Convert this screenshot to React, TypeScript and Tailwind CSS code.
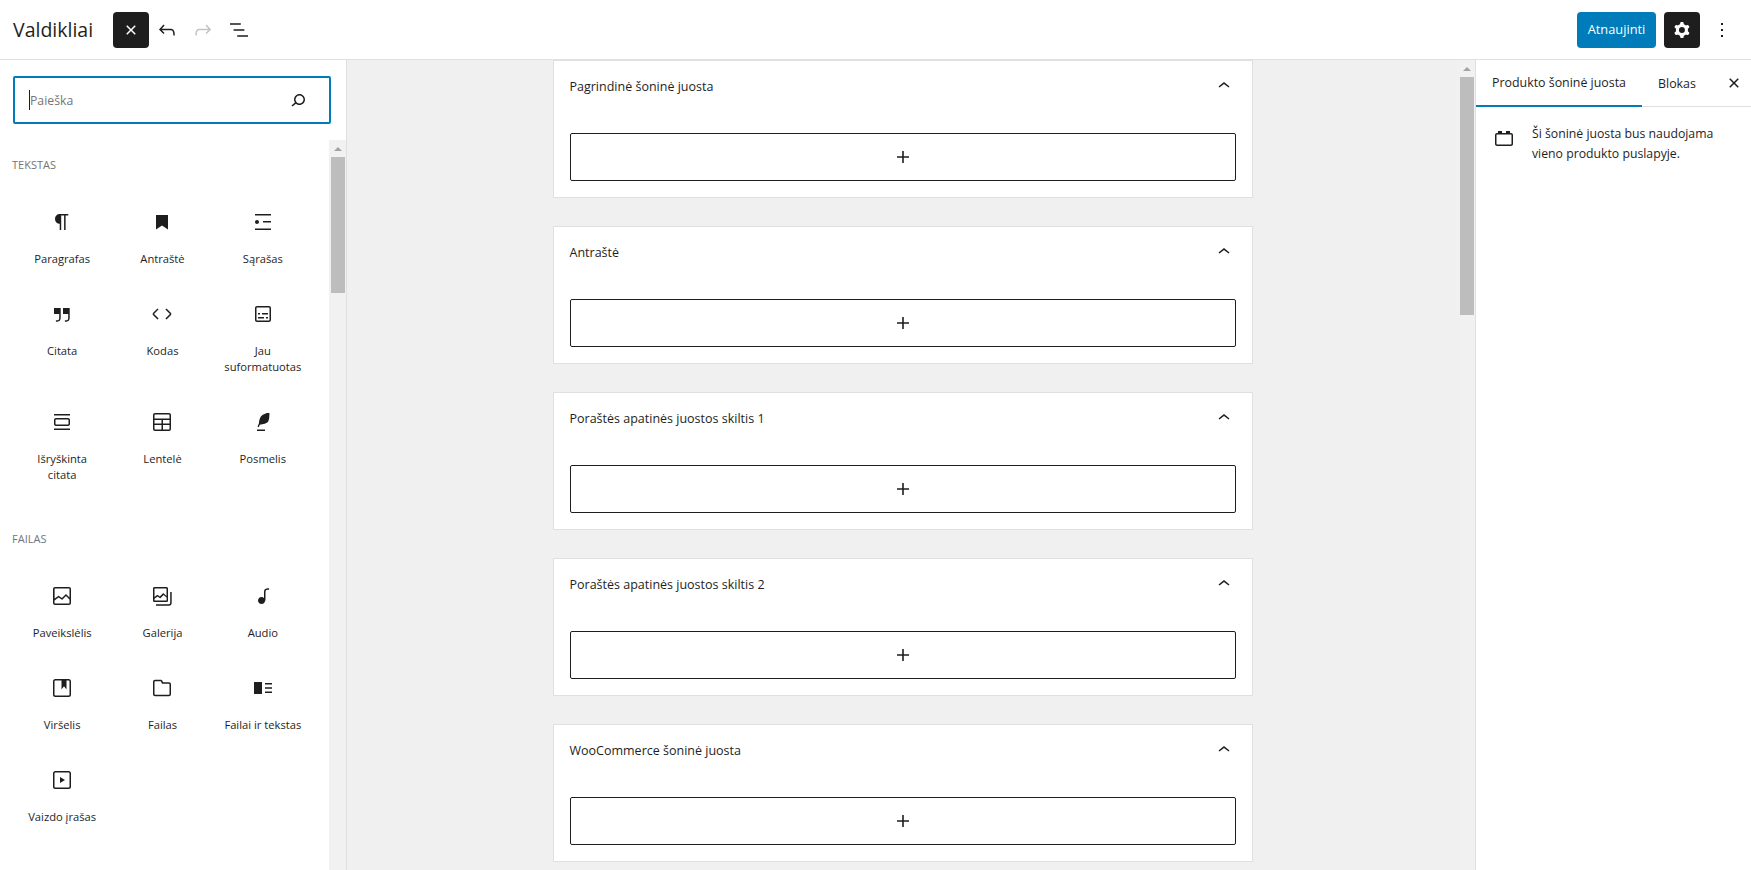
const font = { fontFamily: '"Open Sans", "Noto Sans", sans-serif' };

const icons: Record<string, string> = {
  paragraph: "M18.3 4H9.9v-.1l-.9.2c-2.3.4-4 2.4-4 4.8s1.7 4.4 4 4.8l.7.1V20h1.5V5.5h2.9V20h1.5V5.5h2.7V4z",
  heading: "M6 5h12v14.5l-6-4-6 4z",
  list: "M4 4v1.5h16V4H4zm8 8.5h8V11h-8v1.5zM4 20h16v-1.5H4V20zm4-8c0-1.1-.9-2-2-2s-2 .9-2 2 .9 2 2 2 2-.9 2-2z",
  quote: "M13 6v6h5.2v4c0 .8-.2 1.4-.5 1.7-.6.6-1.6.6-2.5.5h-.3v1.5h.5c1 0 2.3-.1 3.3-1 .6-.6 1-1.6 1-2.8V6H13zm-9 6h5.2v4c0 .8-.2 1.4-.5 1.7-.6.6-1.6.6-2.5.5h-.3v1.5h.5c1 0 2.3-.1 3.3-1 .6-.6 1-1.6 1-2.8V6H4v6z",
  code: "M20.8 10.7l-4.3-4.3-1.1 1.1 4.3 4.3c.1.1.1.3 0 .4l-4.3 4.3 1.1 1.1 4.3-4.3c.7-.8.7-1.9 0-2.6zM4.2 11.8l4.3-4.3-1-1-4.3 4.3c-.7.7-.7 1.8 0 2.5l4.3 4.3 1.1-1.1-4.3-4.3c-.2-.1-.2-.3-.1-.4z",
  preformatted: "M18 4H6c-1.1 0-2 .9-2 2v12c0 1.1.9 2 2 2h12c1.1 0 2-.9 2-2V6c0-1.1-.9-2-2-2zm.5 14c0 .3-.2.5-.5.5H6c-.3 0-.5-.2-.5-.5V6c0-.3.2-.5.5-.5h12c.3 0 .5.2.5.5v12zM7 16.5h6V15H7v1.5zm4-4h6V11h-6v1.5zM9 11H7v1.5h2V11zm6 5.5h2V15h-2v1.5z",
  pullquote: "M18 8H6c-1.1 0-2 .9-2 2v4c0 1.1.9 2 2 2h12c1.1 0 2-.9 2-2v-4c0-1.1-.9-2-2-2zm.5 6c0 .3-.2.5-.5.5H6c-.3 0-.5-.2-.5-.5v-4c0-.3.2-.5.5-.5h12c.3 0 .5.2.5.5v4zM4 4v1.5h16V4H4zm0 16h16v-1.5H4V20z",
  table: "M19 3H5c-1.1 0-2 .9-2 2v14c0 1.1.9 2 2 2h14c1.1 0 2-.9 2-2V5c0-1.1-.9-2-2-2zM5 4.5h14c.3 0 .5.2.5.5v3.5h-15V5c0-.3.2-.5.5-.5zm8 5.5h6.5v3.5H13V10zm-1.5 3.5h-7V10h7v3.5zm-7 5.5v-4h7v4.5H5c-.3 0-.5-.2-.5-.5zm14.5.5h-6V15h6.5v4c0 .3-.2.5-.5.5z",
  verse: "M18.5 2.5c-3.4.7-7 1.8-8.6 4-1.3 1.9-1.9 4.7-2 6.9l-1.4 3.2 1.3.6 1-2.4c3.2-.3 7.2-1.3 8.4-3.2 1.3-2.5 1.1-6.2 1.3-9.1zM6 21h8v-1.5H6z",
  image: "M19 3H5c-1.1 0-2 .9-2 2v14c0 1.1.9 2 2 2h14c1.1 0 2-.9 2-2V5c0-1.1-.9-2-2-2zM5 4.5h14c.3 0 .5.2.5.5v8.4l-3-2.9c-.3-.3-.8-.3-1 0L11.9 14 9 12c-.3-.2-.6-.2-.8 0l-3.6 2.6V5c-.1-.3.1-.5.4-.5zm14 15H5c-.3 0-.5-.2-.5-.5v-2.4l4.1-3 3 1.9c.3.2.7.2.9-.1L16 12l3.5 3.4V19c0 .3-.2.5-.5.5z",
  gallery: "M20.2 8v11c0 .7-.6 1.2-1.2 1.2H6v1.5h13c1.5 0 2.7-1.2 2.7-2.8V8zM18 16.4V4.6c0-.9-.7-1.6-1.6-1.6H4.6C3.7 3 3 3.7 3 4.6v11.8c0 .9.7 1.6 1.6 1.6h11.8c.9 0 1.6-.7 1.6-1.6zM4.5 4.6c0-.1.1-.1.1-.1h11.8c.1 0 .1.1.1.1V12l-2.7-2.5c-.3-.3-.8-.3-1 0l-3 2.9-2-1.3c-.3-.2-.6-.2-.8 0l-2.5 1.9V4.6zm11.9 11.9H4.6c-.1 0-.1 0-.1-.1v-1.6l3-2.2 2.2 1.4c.3.2.7.2.9-.1l3-3 3 2.6v2.9c0 .1-.1.1-.2.1z",
  audio: "M17.7 4.3c-1.2 0-2.8 0-3.8 1-.6.6-.9 1.5-.9 2.6V14c-.6-.6-1.5-1-2.5-1C8.6 13 7 14.6 7 16.5S8.6 20 10.5 20c1.5 0 2.8-1 3.3-2.3.5-.8.7-1.8.7-2.7V7.9c0-.7.2-1.2.5-1.6.6-.6 1.8-.6 2.8-.6h.3V4.3h-.4z",
  cover: "M18.7 3H5.3C4 3 3 4 3 5.3v13.4C3 20 4 21 5.3 21h13.4c1.3 0 2.3-1 2.3-2.3V5.3C21 4 20 3 18.7 3zm.8 15.7c0 .4-.4.8-.8.8H5.3c-.4 0-.8-.4-.8-.8V5.3c0-.4.4-.8.8-.8h6.2v8.9l2.5-3.1 2.5 3.1V4.5h2.2c.4 0 .8.4.8.8v13.4z",
  file: "M19 6.2h-5.9l-.6-1.1C12.1 4.3 11.3 3.8 10.5 3.8H5c-1.1 0-2 .9-2 2v12.4c0 1.1.9 2 2 2h14c1.1 0 2-.9 2-2V8.2c0-1.1-.9-2-2-2zm.5 12c0 .3-.2.5-.5.5H5c-.3 0-.5-.2-.5-.5V5.8c0-.3.2-.5.5-.5h5.5c.2 0 .4.1.5.3l1 2.1H19c.3 0 .5.2.5.5v10z",
  mediaText: "M3 6h8v12H3zM14 7h7v1.5h-7zM14 11.2h7v1.5h-7zM14 15.5h7V17h-7z",
  video: "M18.7 3H5.3C4 3 3 4 3 5.3v13.4C3 20 4 21 5.3 21h13.4c1.3 0 2.3-1 2.3-2.3V5.3C21 4 20 3 18.7 3zm.8 15.7c0 .4-.4.8-.8.8H5.3c-.4 0-.8-.4-.8-.8V5.3c0-.4.4-.8.8-.8h13.4c.4 0 .8.4.8.8v13.4zM10 15l5-3-5-3v6z",
  search: "M13.5 6C10.5 6 8 8.5 8 11.5c0 1.1.3 2.1.9 3l-3.4 3 1 1.1 3.4-2.9c1 .9 2.2 1.4 3.6 1.4 3 0 5.5-2.5 5.5-5.5C19 8.5 16.5 6 13.5 6zm0 9.5c-2.2 0-4-1.8-4-4s1.8-4 4-4 4 1.8 4 4-1.8 4-4 4z",
  close: "M12 13.06l3.712 3.713 1.061-1.06L13.061 12l3.712-3.712-1.06-1.06L12 10.938 8.288 7.227l-1.061 1.06L10.939 12l-3.712 3.712 1.06 1.061L12 13.061z",
  undo: "M18.3 11.7c-.6-.6-1.4-.9-2.3-.9H6.7l2.9-3.3-1.1-1-4.5 5L8.5 16l1-1-2.7-2.7H16c.5 0 .9.2 1.3.5 1 1 1 3.4 1 4.5v.3h1.5v-.2c0-1.5 0-4.3-1.5-5.7z",
  redo: "M15.6 6.5l-1.1 1 2.9 3.3H8c-.9 0-1.7.3-2.3.9-1.4 1.5-1.4 4.2-1.4 5.6v.2h1.5v-.3c0-1.1 0-3.5 1-4.5.3-.3.7-.5 1.3-.5h9.2L14.5 15l1.1 1.1 4.6-4.6-4.6-5z",
  listView: "M13.8 5.2H3v1.5h10.8V5.2zm-3.6 12v1.5H21v-1.5H10.2zm7.2-6H6.6v1.5h10.8v-1.5z",
  cog: "M10.289 4.836A1 1 0 0111.275 4h1.306a1 1 0 01.987.836l.244 1.466c.787.26 1.503.679 2.108 1.218l1.393-.522a1 1 0 011.216.437l.653 1.13a1 1 0 01-.23 1.273l-1.148.944a6.025 6.025 0 010 2.435l1.149.946a1 1 0 01.23 1.272l-.653 1.13a1 1 0 01-1.216.437l-1.394-.522c-.605.54-1.32.958-2.108 1.218l-.244 1.466a1 1 0 01-.987.836h-1.306a1 1 0 01-.986-.836l-.244-1.466a5.995 5.995 0 01-2.108-1.218l-1.394.522a1 1 0 01-1.217-.436l-.653-1.131a1 1 0 01.23-1.272l1.149-.946a6.026 6.026 0 010-2.435l-1.148-.944a1 1 0 01-.23-1.272l.653-1.131a1 1 0 011.217-.437l1.393.522a5.994 5.994 0 012.108-1.218l.244-1.466zM14.929 12a3 3 0 11-6 0 3 3 0 016 0z",
  more: "M13 19h-2v-2h2v2zm0-6h-2v-2h2v2zm0-6h-2V5h2v2z",
  chevronUp: "M6.5 12.4L12 8l5.5 4.4-.9 1.2L12 10l-4.5 3.6-1-1.2z",
  plus: "M18 11.2h-5.2V6h-1.6v5.2H6v1.6h5.2V18h1.6v-5.2H18z",
  sidebar: "M6 5h4v2h4V5h4v2h1c1 0 2 .8 2 2v9c0 1.2-1 2-2 2H5c-1 0-2-.8-2-2V9c0-1.2 1-2 2-2h1zM5 8.5c-.3 0-.5.2-.5.5v9c0 .3.2.5.5.5h14c.3 0 .5-.2.5-.5V9c0-.3-.2-.5-.5-.5z",
};

function Icon({ name, className = "" }: { name: string; className?: string }) {
  return (
    <svg viewBox="0 0 24 24" width="24" height="24" fill="currentColor" fillRule="evenodd" className={className}>
      <path d={icons[name]} />
    </svg>
  );
}

function Scrollbar({ thumb }: { thumb: string }) {
  return (
    <div className="w-[17px] shrink-0 bg-[#f1f1f1] flex flex-col items-center">
      <div className="h-[17px] w-full flex items-center justify-center">
        <div className="w-0 h-0 border-x-[4px] border-x-transparent border-b-[4px] border-b-[#a3a3a3]" />
      </div>
      <div className={`w-[14px] bg-[#bdbdbd] ${thumb}`} />
    </div>
  );
}

const textBlocks = [
  { icon: "paragraph", label: "Paragrafas" },
  { icon: "heading", label: "Antraštė" },
  { icon: "list", label: "Sąrašas" },
  { icon: "quote", label: "Citata" },
  { icon: "code", label: "Kodas" },
  { icon: "preformatted", label: "Jau\nsuformatuotas" },
  { icon: "pullquote", label: "Išryškinta\ncitata" },
  { icon: "table", label: "Lentelė" },
  { icon: "verse", label: "Posmelis" },
];

const fileBlocks = [
  { icon: "image", label: "Paveikslėlis" },
  { icon: "gallery", label: "Galerija" },
  { icon: "audio", label: "Audio" },
  { icon: "cover", label: "Viršelis" },
  { icon: "file", label: "Failas" },
  { icon: "mediaText", label: "Failai ir tekstas" },
  { icon: "video", label: "Vaizdo įrašas" },
];

const areas = [
  "Pagrindinė šoninė juosta",
  "Antraštė",
  "Poraštės apatinės juostos skiltis 1",
  "Poraštės apatinės juostos skiltis 2",
  "WooCommerce šoninė juosta",
];

function BlockGrid({ items }: { items: { icon: string; label: string }[] }) {
  return (
    <div className="grid grid-cols-3">
      {items.map((item) => (
        <div key={item.label} className="flex flex-col items-center pt-[25px] pb-[11px] px-1 text-center">
          <Icon name={item.icon} className="text-[#1e1e1e]" />
          <div className="mt-4 text-[11.2px] leading-4 pt-px -mb-px whitespace-pre-line text-[#1e1e1e]">{item.label}</div>
        </div>
      ))}
    </div>
  );
}

function SectionTitle({ children }: { children: string }) {
  return <div className="h-4 mb-3 text-[11px] leading-4 uppercase text-[#757575]">{children}</div>;
}

export default function App() {
  return (
    <div className="h-screen overflow-hidden flex flex-col bg-white text-[#1e1e1e]" style={font}>
      <header className="h-[60px] shrink-0 border-b border-[#e0e0e0] flex items-center pl-[13px] pr-[11px]">
        <h1 className="text-[19.5px] leading-none w-[100px]">Valdikliai</h1>
        <button className="w-9 h-9 rounded-sm bg-[#1e1e1e] text-white flex items-center justify-center">
          <Icon name="close" />
        </button>
        <button className="w-9 h-9 flex items-center justify-center">
          <Icon name="undo" />
        </button>
        <button className="w-9 h-9 flex items-center justify-center text-[#c4c4c4]">
          <Icon name="redo" />
        </button>
        <button className="w-9 h-9 flex items-center justify-center">
          <Icon name="listView" />
        </button>
        <div className="ml-auto flex items-center">
          <button className="w-[79px] h-9 rounded-sm bg-[#007cba] text-white text-[12.8px]">Atnaujinti</button>
          <button className="ml-2 w-9 h-9 rounded-sm bg-[#1e1e1e] text-white flex items-center justify-center">
            <Icon name="cog" />
          </button>
          <button className="ml-1 w-9 h-9 flex items-center justify-center">
            <Icon name="more" />
          </button>
        </div>
      </header>

      <div className="flex-1 min-h-0 flex">
        <aside className="w-[347px] shrink-0 border-r border-[#e0e0e0] flex flex-col">
          <div className="h-[80px] shrink-0 pl-[13px] pr-[15px] pt-4">
            <div className="h-12 border-2 border-[#007cba] rounded-[2px] flex items-center pl-[14px] pr-[19px]">
              <span className="w-px h-5 bg-[#1e1e1e] shrink-0" />
              <input
                placeholder="Paieška"
                className="flex-1 min-w-0 outline-none pt-[2px] text-[12.25px] placeholder:text-[#757575]"
              />
              <Icon name="search" />
            </div>
          </div>
          <div className="flex-1 min-h-0 flex">
            <div className="flex-1 min-w-0 overflow-hidden pl-3 pr-4 pt-[17px]">
              <SectionTitle>Tekstas</SectionTitle>
              <BlockGrid items={textBlocks} />
              <div className="h-[38px]" />
              <SectionTitle>Failas</SectionTitle>
              <BlockGrid items={fileBlocks} />
            </div>
            <Scrollbar thumb="h-[136px]" />
          </div>
        </aside>

        <main className="flex-1 min-w-0 bg-[#f0f0f0] flex">
          <div className="flex-1 min-w-0 overflow-hidden flex flex-col items-center gap-7">
            {areas.map((title) => (
              <section key={title} className="w-[700px] shrink-0 bg-white border border-[#e0e0e0] px-4 pt-[15px] pb-4">
                <div className="h-5 mb-[37px] flex items-center justify-between">
                  <span className="text-[12.5px] pt-[2px]">{title}</span>
                  <Icon name="chevronUp" />
                </div>
                <div className="h-12 border border-[#1e1e1e] rounded-[2px] flex items-center justify-center">
                  <Icon name="plus" />
                </div>
              </section>
            ))}
          </div>
          <Scrollbar thumb="h-[238px]" />
        </main>

        <aside className="w-[276px] shrink-0 border-l border-[#e0e0e0] flex flex-col">
          <div className="h-[47px] shrink-0 border-b border-[#e0e0e0] flex items-center text-[12.4px]">
            <div className="h-[47px] px-4 pt-[2px] flex items-center border-b-2 border-[#007cba] whitespace-nowrap">Produkto šoninė juosta</div>
            <div className="h-[47px] px-4 pt-[2px] flex items-center">Blokas</div>
            <button className="ml-auto mr-px w-8 h-8 flex items-center justify-center">
              <Icon name="close" />
            </button>
          </div>
          <div className="flex pl-4 pr-4 pt-[17px] gap-4">
            <Icon name="sidebar" className="shrink-0 mt-[2px]" />
            <p className="text-[12.25px] leading-5 text-[#1e1e1e]">
              Ši šoninė juosta bus naudojama vieno produkto puslapyje.
            </p>
          </div>
        </aside>
      </div>
    </div>
  );
}
